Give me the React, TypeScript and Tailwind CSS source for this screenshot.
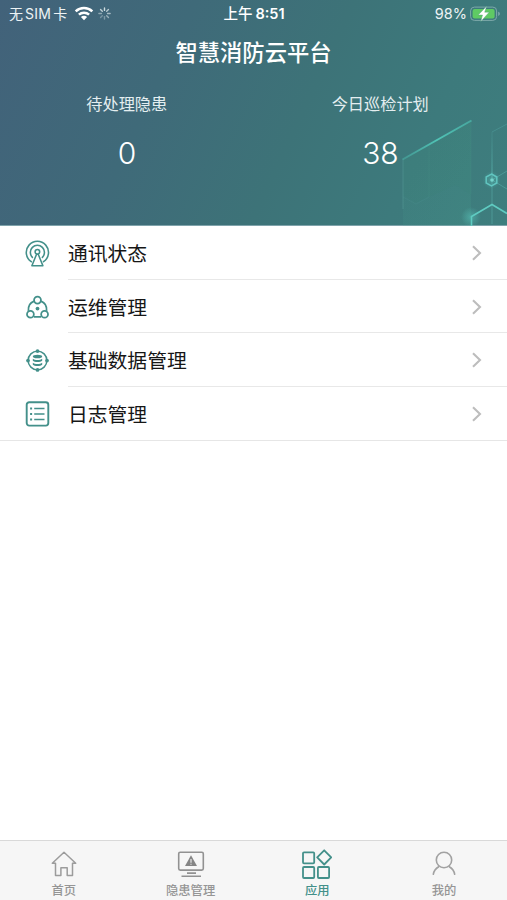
import type { ReactNode } from "react";

const TEAL = "#43908a";

function Wifi() {
  return (
    <svg width="20" height="15" viewBox="0 0 20 15" fill="none" stroke="#fff" strokeWidth="2.5">
      <path d="M1.7 5.4C6.3 0.9 13.7 0.9 18.3 5.4" />
      <path d="M4.9 8.7C7.8 6 12.2 6 15.1 8.7" />
      <path d="M10 14.2 6.9 11c1.8-1.6 4.4-1.6 6.2 0z" fill="#fff" stroke="none" />
    </svg>
  );
}

const spokes = [0.9, 0.75, 0.65, 0.55, 0.4, 0.35, 0.5, 0.8];

function Spinner() {
  return (
    <svg width="13" height="13" viewBox="0 0 13 13" stroke="#dfeaec" strokeWidth="1.4" strokeLinecap="round">
      {spokes.map((o, i) => (
        <path key={i} d="M6.5 0.9v2.5" opacity={o} transform={`rotate(${i * 45} 6.5 6.5)`} />
      ))}
    </svg>
  );
}

function Battery() {
  return (
    <svg width="31" height="16" viewBox="0 0 31 16">
      <rect x="0.6" y="1.1" width="26" height="13.3" rx="3.8" fill="none" stroke="#7fa9ab" strokeWidth="1" />
      <rect x="2.6" y="3.1" width="22" height="9.3" rx="2" fill="#5fca64" />
      <path d="M28.2 5.7c2.2.6 2.2 3.6 0 4.2z" fill="#7fa9ab" />
      <path d="M16.6.3 8.200 9h4.300L10.800 15.500l8.400-9.300h-4.500z" fill="#fff" stroke="#4b9e79" strokeWidth=".4" />
    </svg>
  );
}

function HexArt() {
  return (
    <svg className="absolute right-0 -bottom-px" width="127" height="115" viewBox="380 110 127 115" fill="none">
      <defs>
        <linearGradient id="panel" x1="0" y1="0" x2="1" y2="1">
          <stop offset="0" stopColor="#48a18f" stopOpacity=".06" />
          <stop offset="1" stopColor="#48a18f" stopOpacity=".2" />
        </linearGradient>
        <linearGradient id="beam" x1="402" y1="158" x2="472" y2="120" gradientUnits="userSpaceOnUse">
          <stop offset="0" stopColor="#4ab2a8" stopOpacity=".5" />
          <stop offset=".5" stopColor="#50c4b6" />
          <stop offset="1" stopColor="#4ab2a8" stopOpacity=".8" />
        </linearGradient>
        <linearGradient id="fade" x1="0" y1="131" x2="0" y2="180" gradientUnits="userSpaceOnUse">
          <stop offset="0" stopColor="#56aaa7" stopOpacity=".2" />
          <stop offset="1" stopColor="#5dbcb5" stopOpacity=".8" />
        </linearGradient>
        <radialGradient id="glow">
          <stop offset="0" stopColor="#62dccf" stopOpacity=".8" />
          <stop offset="1" stopColor="#62dccf" stopOpacity="0" />
        </radialGradient>
      </defs>
      <path d="M403 158 471 120V225H403z" fill="url(#panel)" />
      <path d="M403 158 429 145v50l-13 7-13-8zM429 143l42-23v74l-16-10-26 12z" fill="#3d807a" opacity=".2" />
      <path d="M403 158V208" stroke="#62a6a0" opacity=".4" />
      <path d="M429 144v52l-13 7-13-7M471 120v73" stroke="#57a39c" opacity=".15" />
      <path d="M402.500 158.500 471.500 119.500" stroke="url(#beam)" strokeWidth="2" />
      <path d="M492 131l15-8" stroke="#56aaa7" opacity=".4" />
      <path d="M491.500 131h1v46h-1z" fill="url(#fade)" />
      <path d="M492 179v44M492 179l15-9M492 179l15 9" stroke="#56aaa7" opacity=".6" />
      <circle cx="491.500" cy="179" r="9" fill="url(#glow)" opacity=".4" />
      <path d="m491.500 173 5.300 3v6l-5.300 3-5.300-3v-6z" stroke="#61c5c0" strokeWidth="1.500" />
      <circle cx="492" cy="179" r="1.800" fill="#76d4cc" />
      <circle cx="471" cy="216" r="10" fill="url(#glow)" opacity=".5" />
      <path d="M471.500 225V215.500L492 203.500l15 9" stroke="#5fcbc1" strokeWidth="1.600" />
    </svg>
  );
}

function Antenna() {
  return (
    <svg width="25" height="27" viewBox="0 0 24 26" fill="none" stroke={TEAL} strokeWidth="1.500" strokeLinecap="round">
      <path d="M6 20.900A10.700 10.700 0 1 1 17.800 20.900" />
      <path d="M7.100 16.700A6.800 6.800 0 1 1 16.700 16.700" />
      <circle cx="11.900" cy="11.400" r="2.200" />
      <path d="M11 14 6.600 24.800h10.600L12.800 14" strokeLinejoin="round" />
    </svg>
  );
}

function Ops() {
  return (
    <svg width="25" height="25" viewBox="0 0 24 24" fill="none" stroke={TEAL} strokeWidth="1.700">
      <circle cx="12" cy="4.900" r="3.300" />
      <circle cx="5.200" cy="18.500" r="3.300" />
      <circle cx="18.800" cy="18.500" r="3.300" />
      <path d="M8.700 5.900C4.800 7.500 2.900 11 3.300 15.200M15.300 5.900c3.900 1.600 5.800 5.100 5.400 9.300M8.500 21h7" />
      <circle cx="12" cy="13" r="1.800" fill={TEAL} stroke="none" />
    </svg>
  );
}

function Database() {
  return (
    <svg width="25" height="25" viewBox="0 0 24 24" fill="none" stroke={TEAL}>
      <circle cx="12" cy="12" r="9" strokeWidth="1.400" />
      <g fill={TEAL} stroke="none">
        <circle cx="12" cy="2.900" r="1.800" />
        <circle cx="12" cy="21.100" r="1.800" />
        <circle cx="2.900" cy="12" r="1.800" />
        <circle cx="21.100" cy="12" r="1.800" />
        <ellipse cx="12" cy="8.100" rx="4.500" ry="1.700" />
        <path d="M7.500 10.300c1.800 1.600 7.200 1.600 9 0v1.900c-1.500 1.700-7.500 1.700-9 0zM7.500 14.100c1.800 1.600 7.200 1.600 9 0v1.900c-1.500 1.700-7.500 1.700-9 0z" />
      </g>
    </svg>
  );
}

function Log() {
  return (
    <svg width="25" height="26" viewBox="0 0 24 26" fill="none" stroke={TEAL}>
      <rect x="1.200" y="1.200" width="21.600" height="23.400" rx="2.500" strokeWidth="1.900" />
      <path d="M8.700 7.500H19M8.700 13H19M8.700 18.500H19" strokeWidth="1.600" />
      <path d="M4.600 7.500h2M4.600 13h2M4.600 18.500h2" strokeWidth="1.900" />
    </svg>
  );
}

function Home() {
  return (
    <svg width="26" height="28" viewBox="0 0 26 28" fill="none" stroke="#9c9c9c" strokeWidth="1.500" strokeLinejoin="round" strokeLinecap="round">
      <path d="M4.500 13.200H1.300L13 2.300l11.700 10.900h-3.200v12.200h-5.300v-7.600H9.900v7.600H4.500z" />
    </svg>
  );
}

function Monitor() {
  return (
    <svg width="28" height="28" viewBox="0 0 28 28" fill="none" stroke="#929292" strokeWidth="1.600">
      <rect x="1.700" y="2.300" width="24.600" height="17.800" rx="1.500" />
      <path d="M10 23.100h9M4.500 26.300h19.500" />
      <path d="m14 5.300 6 10.700H8z" fill="#858585" stroke="none" />
      <path d="M14 9v3.800M14 13.700v1" stroke="#f1f1f1" strokeWidth="1.100" />
    </svg>
  );
}

function Apps() {
  return (
    <svg width="30" height="30" viewBox="0 0 30 30" fill="none" stroke={TEAL} strokeWidth="1.800">
      <rect x="1" y="3.300" width="11.200" height="11" rx="1" />
      <rect x="1" y="18" width="11.200" height="11" rx="1" />
      <rect x="15.900" y="18" width="11.200" height="11" rx="1" />
      <path d="m22.200 1.300 7 7.100-7 7.100-7-7.100z" strokeLinejoin="round" />
    </svg>
  );
}

function Person() {
  return (
    <svg width="24" height="28" viewBox="0 0 24 28" fill="none" stroke="#a2a2a2" strokeWidth="1.600" strokeLinecap="round">
      <circle cx="12" cy="10" r="7.700" />
      <path d="M6.700 16.700C3.800 18.400 1.800 21 1.300 24.300M17.300 16.700c2.900 1.700 4.900 4.300 5.400 7.600" />
    </svg>
  );
}

function Stat({ label, value }: { label: string; value: string }) {
  return (
    <div className="flex flex-1 flex-col items-center">
      <span className="text-[16.2px] leading-6 text-[#e4eef0]">{label}</span>
      <span className="mt-[18px] font-['Inter',sans-serif] text-[30px] leading-[38px] font-[350] tracking-[-0.3px] text-white">{value}</span>
    </div>
  );
}

function Row({ icon, label, last }: { icon: ReactNode; label: string; last?: boolean }) {
  return (
    <li className={last ? "flex h-[53.7px] border-b border-[#e6e6e6]" : "flex h-[53.7px]"}>
      <div className="flex w-[68px] items-center pt-[1px] pl-[25px]">{icon}</div>
      <div
        className={
          last
            ? "flex flex-1 items-center justify-between pt-[1px] pr-6"
            : "flex flex-1 items-center justify-between border-b border-[#e8e8e8] pt-[1px] pr-6"
        }
      >
        <span className="pt-[2px] text-[19.8px] leading-7 text-[#161616]">{label}</span>
        <svg width="12" height="16" viewBox="0 0 12 16" fill="none" stroke="#bdbdbd" strokeWidth="2.1">
          <path d="m2 1.200 7 6.800-7 6.800" />
        </svg>
      </div>
    </li>
  );
}

function Tab({ icon, label, active }: { icon: ReactNode; label: string; active?: boolean }) {
  return (
    <div className="flex flex-1 flex-col items-center pl-[1px]">
      <div className={active ? "flex h-[38px] shrink-0 items-end" : "flex h-[37px] shrink-0 items-end"}>{icon}</div>
      <span
        className={
          active
            ? "mt-[3px] text-[12.3px] leading-[18px] font-medium text-[#43908a]"
            : "mt-[4px] text-[12.3px] leading-[18px] font-medium text-[#959595]"
        }
      >
        {label}
      </span>
    </div>
  );
}

export default function App() {
  return (
    <div className="flex h-[900px] w-[507px] flex-col overflow-hidden bg-white font-['Inter','Noto_Sans_CJK_SC',sans-serif]">
      <header className="relative h-[226px] shrink-0 border-b border-[#7fa3ab] bg-[linear-gradient(115deg,#42627a_0%,#3f6a79_32%,#3d7378_58%,#3d7a7c_80%,#3e7e7e_100%)]">
        <HexArt />
        <div className="grid h-7 grid-cols-3 items-center pr-[6px] pl-[9px] text-white">
          <div className="flex items-center pb-[1px] text-[14px] leading-5 text-[#edf3f5]">
            <span className="w-[65px] whitespace-nowrap">无<span className="mx-[2px] tracking-[0.3px]">SIM</span>卡</span>
            <Wifi />
            <span className="ml-1"><Spinner /></span>
          </div>
          <span className="pr-[2px] text-center text-[14.500px] leading-5 font-medium whitespace-nowrap">
            上午<span className="ml-[3px] font-semibold">8:51</span>
          </span>
          <div className="flex items-center justify-end gap-[3px] pb-[1px] text-[14.500px] leading-5 text-[#edf3f5]">
            <span>98%</span>
            <Battery />
          </div>
        </div>
        <h1 className="mt-[9px] text-center text-[22.300px] leading-8 font-medium text-white">智慧消防云平台</h1>
        <div className="mt-[23px] flex">
          <Stat label="待处理隐患" value="0" />
          <Stat label="今日巡检计划" value="38" />
        </div>
      </header>
      <ul>
        <Row icon={<Antenna />} label="通讯状态" />
        <Row icon={<Ops />} label="运维管理" />
        <Row icon={<Database />} label="基础数据管理" />
        <Row icon={<Log />} label="日志管理" last />
      </ul>
      <main className="flex-1" />
      <nav className="flex h-[60px] shrink-0 border-t border-[#d9d9d9] bg-[#f6f6f6]">
        <Tab icon={<Home />} label="首页" />
        <Tab icon={<Monitor />} label="隐患管理" />
        <Tab icon={<Apps />} label="应用" active />
        <Tab icon={<Person />} label="我的" />
      </nav>
    </div>
  );
}
